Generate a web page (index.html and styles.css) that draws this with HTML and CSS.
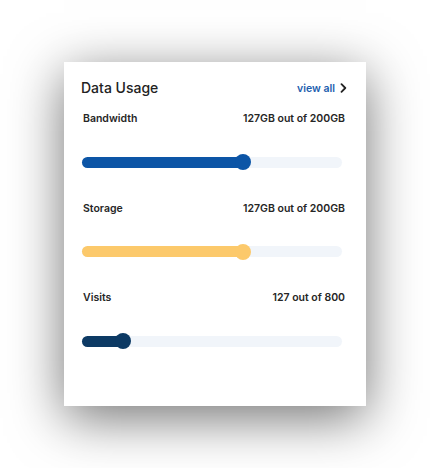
FILE: index.html
```html
<!DOCTYPE html>
<html>
<head>
<meta charset="utf-8">
<link rel="stylesheet" href="styles.css">
</head>
<body>
  <div class="card">
    <div class="card-header">
      <h2 class="title">Data Usage</h2>
      <a class="view-all" href="#">view all
        <svg class="chev" width="7" height="10" viewBox="0 0 7 10"><path d="M1.5 1.2 L5.3 5 L1.5 8.8" fill="none" stroke="#222" stroke-width="1.8" stroke-linecap="round" stroke-linejoin="round"/></svg>
      </a>
    </div>
    <div class="usage">
      <div class="row">
        <div class="row-head"><span>Bandwidth</span><span>127GB out of 200GB</span></div>
        <div class="track"><div class="fill fill-blue" style="width:62%"></div></div>
      </div>
      <div class="row">
        <div class="row-head"><span>Storage</span><span>127GB out of 200GB</span></div>
        <div class="track"><div class="fill fill-yellow" style="width:62%"></div></div>
      </div>
      <div class="row">
        <div class="row-head"><span>Visits</span><span>127 out of 800</span></div>
        <div class="track"><div class="fill fill-navy" style="width:15.9%"></div></div>
      </div>
    </div>
  </div>
</body>
</html>
```

FILE: styles.css
```css
* { box-sizing: border-box; }
html, body { margin: 0; background: #ffffff; }
body {
  padding: 62px 64px;
  font-family: Inter, "Open Sans", "Liberation Sans", sans-serif;
}
.card {
  width: 302px;
  height: 344px;
  background: #fff;
  box-shadow: 0 12px 50px rgba(0, 0, 0, 0.55);
  padding-top: 16px;
}
.card-header {
  display: flex;
  justify-content: space-between;
  align-items: center;
  height: 20px;
  padding: 0 19px 0 17px;
}
.title {
  margin: 0;
  font-size: 14px;
  font-weight: 500;
  line-height: 20px;
  color: #222;
}
.view-all {
  display: flex;
  align-items: center;
  gap: 5px;
  font-size: 10.5px;
  font-weight: 600;
  color: #1d5eae;
  text-decoration: none;
}
.chev { display: block; }
.usage {
  display: flex;
  flex-direction: column;
  gap: 31.5px;
  padding: 14px 21px 0 18px;
}
.row {
  display: flex;
  flex-direction: column;
  gap: 28px;
}
.row-head {
  display: flex;
  justify-content: space-between;
  padding-left: 1px;
  font-size: 10.5px;
  font-weight: 600;
  line-height: 14px;
  color: #262626;
}
.track {
  height: 16px;
  margin-right: 3px;
  display: flex;
  align-items: center;
  position: relative;
}
.track::before {
  content: "";
  position: absolute;
  left: 0; right: 0;
  top: 2.5px;
  height: 11px;
  border-radius: 6px;
  background: #f1f5fa;
}
.fill {
  position: relative;
  height: 11px;
  border-radius: 6px 0 0 6px;
}
.fill::after {
  content: "";
  position: absolute;
  right: -8px;
  top: -2.5px;
  width: 16px;
  height: 16px;
  border-radius: 50%;
  background: inherit;
}
.fill-blue { background: #0c55a6; }
.fill-yellow { background: #fcc96b; }
.fill-navy { background: #0d3a64; }
```
